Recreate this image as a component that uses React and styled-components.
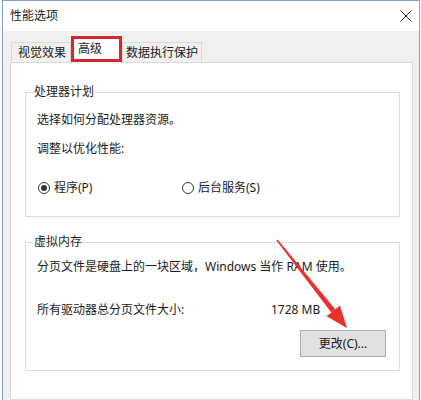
import React from "react";
import styled, { createGlobalStyle } from "styled-components";

const Global = createGlobalStyle`
  html, body { margin: 0; padding: 0; background: #ffffff; }
  body {
    font-family: "Segoe UI", "Noto Sans", "Noto Sans CJK SC", sans-serif;
    font-size: 12px;
    color: #1a1a1a;
  }
`;

const Window = styled.div`
  position: relative;
  box-sizing: border-box;
  margin-left: 2px;
  width: 418px;
  height: 400px;
  border: 1px solid #7f9fd8;
  border-bottom: none;
  background: #f0f0f0;
  overflow: hidden;
  display: flex;
  flex-direction: column;
`;

const TitleBar = styled.div`
  height: 30px;
  background: #ffffff;
  display: flex;
  align-items: center;
  justify-content: space-between;
  padding: 0 7px;
  font-size: 12px;
  line-height: 16px;
  color: #1a1a1a;
`;

const Body = styled.div`
  flex: 1;
  display: flex;
  flex-direction: column;
  padding: 6px 6px 0 7px;
`;

const TabRow = styled.div`
  display: flex;
  align-items: flex-end;
  height: 25px;
`;

const Tab = styled.div`
  box-sizing: border-box;
  position: relative;
  width: ${(p) => p.$w}px;
  height: ${(p) => (p.$active ? 26 : 20)}px;
  margin-bottom: ${(p) => (p.$active ? -1 : 0)}px;
  padding-left: ${(p) => p.$pl}px;
  display: flex;
  align-items: center;
  padding-bottom: ${(p) => (p.$active ? 4 : 0)}px;
  background: ${(p) => (p.$active ? "#ffffff" : "#f0f0f0")};
  border: 1px solid #d9d9d9;
  border-bottom: none;
  margin-left: ${(p) => p.$ml || 0}px;
  z-index: ${(p) => (p.$active ? 2 : 1)};
  line-height: 16px;
  white-space: nowrap;

  ${(p) =>
    p.$active &&
    `
    &::after {
      content: "";
      position: absolute;
      left: -1px;
      right: -1px;
      top: -2px;
      bottom: 1px;
      border: 3px solid #d9262c;
      pointer-events: none;
    }
  `}
`;

const Panel = styled.div`
  flex: 1;
  background: #ffffff;
  border: 1px solid #d9d9d9;
  padding: 21px 12px 0 14px;
  display: flex;
  flex-direction: column;
  gap: 17px;
`;

const Group = styled.fieldset`
  margin: 0;
  min-width: 0;
  border: 1px solid #dcdcdc;
  padding: 0 13px ${(p) => p.$pb}px 11px;
  display: flex;
  flex-direction: column;
`;

const Legend = styled.legend`
  margin-left: -4px;
  padding: 0 1px;
  line-height: 16px;
`;

const Line = styled.div`
  line-height: 16px;
  margin-top: ${(p) => p.$mt}px;
  white-space: nowrap;
`;

const RadioRow = styled.div`
  display: grid;
  grid-template-columns: 144px auto;
  margin-top: ${(p) => p.$mt}px;
`;

const RadioItem = styled.label`
  display: flex;
  align-items: center;
  gap: 4px;
  line-height: 16px;
`;

const RadioCircle = styled.span`
  box-sizing: border-box;
  width: 12px;
  height: 12px;
  border-radius: 50%;
  border: 1px solid #333333;
  display: inline-flex;
  align-items: center;
  justify-content: center;
  margin-left: 1px;

  &::after {
    content: "";
    width: 6px;
    height: 6px;
    border-radius: 50%;
    background: ${(p) => (p.$checked ? "#333333" : "transparent")};
  }
`;

const SizeRow = styled.div`
  display: grid;
  grid-template-columns: 234px auto;
  line-height: 16px;
  margin-top: ${(p) => p.$mt}px;
`;

const ButtonRow = styled.div`
  display: flex;
  justify-content: flex-end;
  margin-top: 12px;
`;

const Button = styled.button`
  box-sizing: border-box;
  width: 86px;
  height: 27px;
  background: #e1e1e1;
  border: 1px solid #adadad;
  font: inherit;
  color: #1a1a1a;
  padding: 0;
  line-height: 16px;
`;

const Arrow = styled.svg`
  position: absolute;
  left: 0;
  top: 0;
  pointer-events: none;
`;

function CloseIcon() {
  return (
    <svg width="12" height="12" viewBox="0 0 12 12">
      <path d="M0.5 0.5 L11.5 11.5 M11.5 0.5 L0.5 11.5" stroke="#222" strokeWidth="1" fill="none" />
    </svg>
  );
}

export default function App() {
  return (
    <>
      <Global />
      <Window>
        <TitleBar>
          <span>性能选项</span>
          <CloseIcon />
        </TitleBar>
        <Body>
          <TabRow>
            <Tab $w={60} $pl={6} $ml={1}>视觉效果</Tab>
            <Tab $w={51} $pl={6} $active>高级</Tab>
            <Tab $w={80} $pl={3}>数据执行保护</Tab>
          </TabRow>
          <Panel>
            <Group $pb={20}>
              <Legend>处理器计划</Legend>
              <Line $mt={12}>选择如何分配处理器资源。</Line>
              <Line $mt={13}>调整以优化性能:</Line>
              <RadioRow $mt={23}>
                <RadioItem>
                  <RadioCircle $checked />
                  程序(P)
                </RadioItem>
                <RadioItem>
                  <RadioCircle />
                  后台服务(S)
                </RadioItem>
              </RadioRow>
            </Group>
            <Group $pb={13}>
              <Legend>虚拟内存</Legend>
              <Line $mt={9}>分页文件是硬盘上的一块区域，Windows 当作 RAM 使用。</Line>
              <SizeRow $mt={27}>
                <span>所有驱动器总分页文件大小:</span>
                <span>1728 MB</span>
              </SizeRow>
              <ButtonRow>
                <Button>更改(C)...</Button>
              </ButtonRow>
            </Group>
          </Panel>
        </Body>
        <Arrow width="416" height="399" viewBox="3 1 416 399">
          <polygon
            points="277.6,239.5 335.3,309.2 331.3,312.4 276.4,240.5"
            fill="#e8302f"
          />
          <polygon points="340,305.5 347,328 326.6,316.2" fill="#e8302f" />
        </Arrow>
      </Window>
    </>
  );
}
